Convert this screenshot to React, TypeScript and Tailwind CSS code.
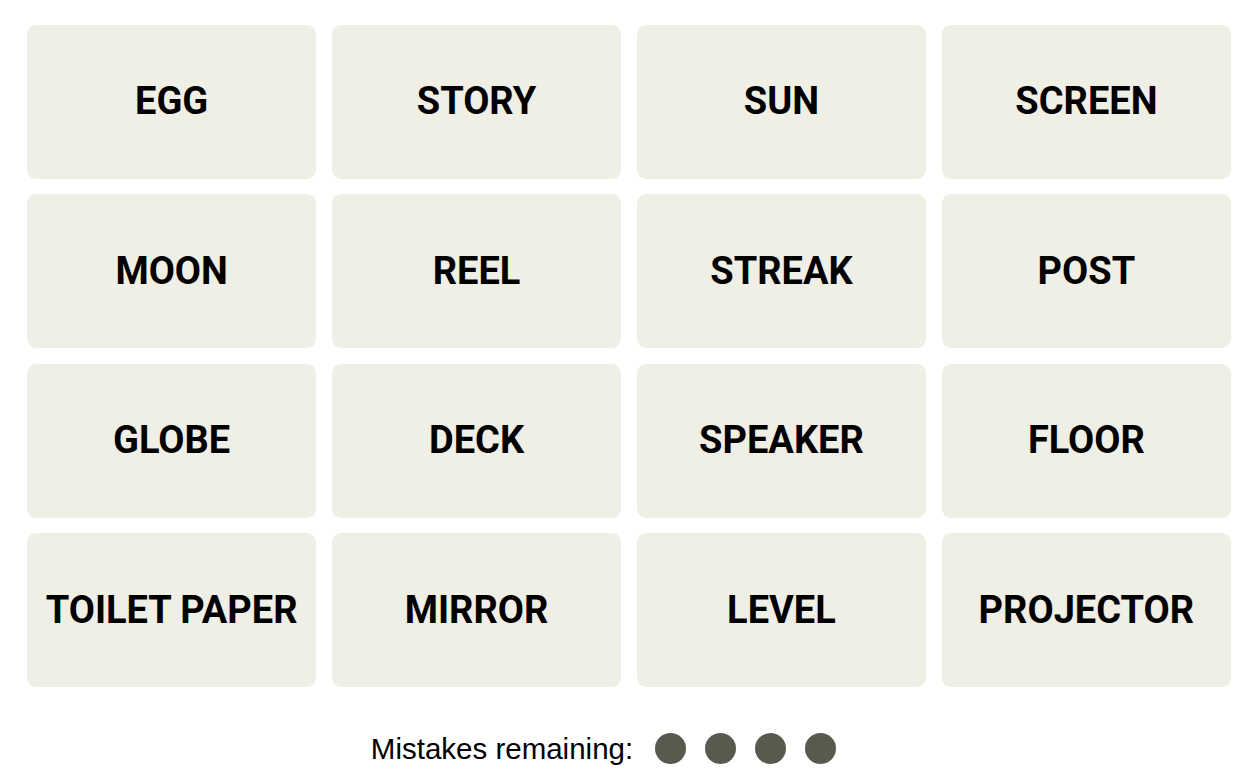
import React from "react";

const words = [
    "EGG", "STORY", "SUN", "SCREEN",
    "MOON", "REEL", "STREAK", "POST",
    "GLOBE", "DECK", "SPEAKER", "FLOOR",
    "TOILET PAPER", "MIRROR", "LEVEL", "PROJECTOR",
];

export default function App() {
    return (
        <div className="min-h-screen bg-white">
            <div className="pl-[27px] pr-[19px] pt-[25px]">
                <div className="grid grid-cols-4 gap-x-[15.7px] gap-y-[15.8px]">
                    {words.map((w) => (
                        <button
                            key={w}
                            className="h-[153.7px] rounded-[9px] bg-[#efefe6] flex items-center justify-center text-black text-[38px] font-bold"
                            style={{ fontFamily: "Roboto, 'Liberation Sans', sans-serif" }}
                        >
                            {w}
                        </button>
                    ))}
                </div>
            </div>

            <div className="mt-[46px] flex items-center justify-center pr-[43px]">
                <span
                    className="text-[29.5px] text-black leading-none"
                    style={{ fontFamily: "'Liberation Sans', Arial, sans-serif" }}
                >
                    Mistakes remaining:
                </span>
                <div className="ml-[22px] flex items-center gap-[19px]">
                    {[0, 1, 2, 3].map((i) => (
                        <span key={i} className="block w-[31px] h-[31px] rounded-full bg-[#5a594e]" />
                    ))}
                </div>
            </div>
        </div>
    );
}
